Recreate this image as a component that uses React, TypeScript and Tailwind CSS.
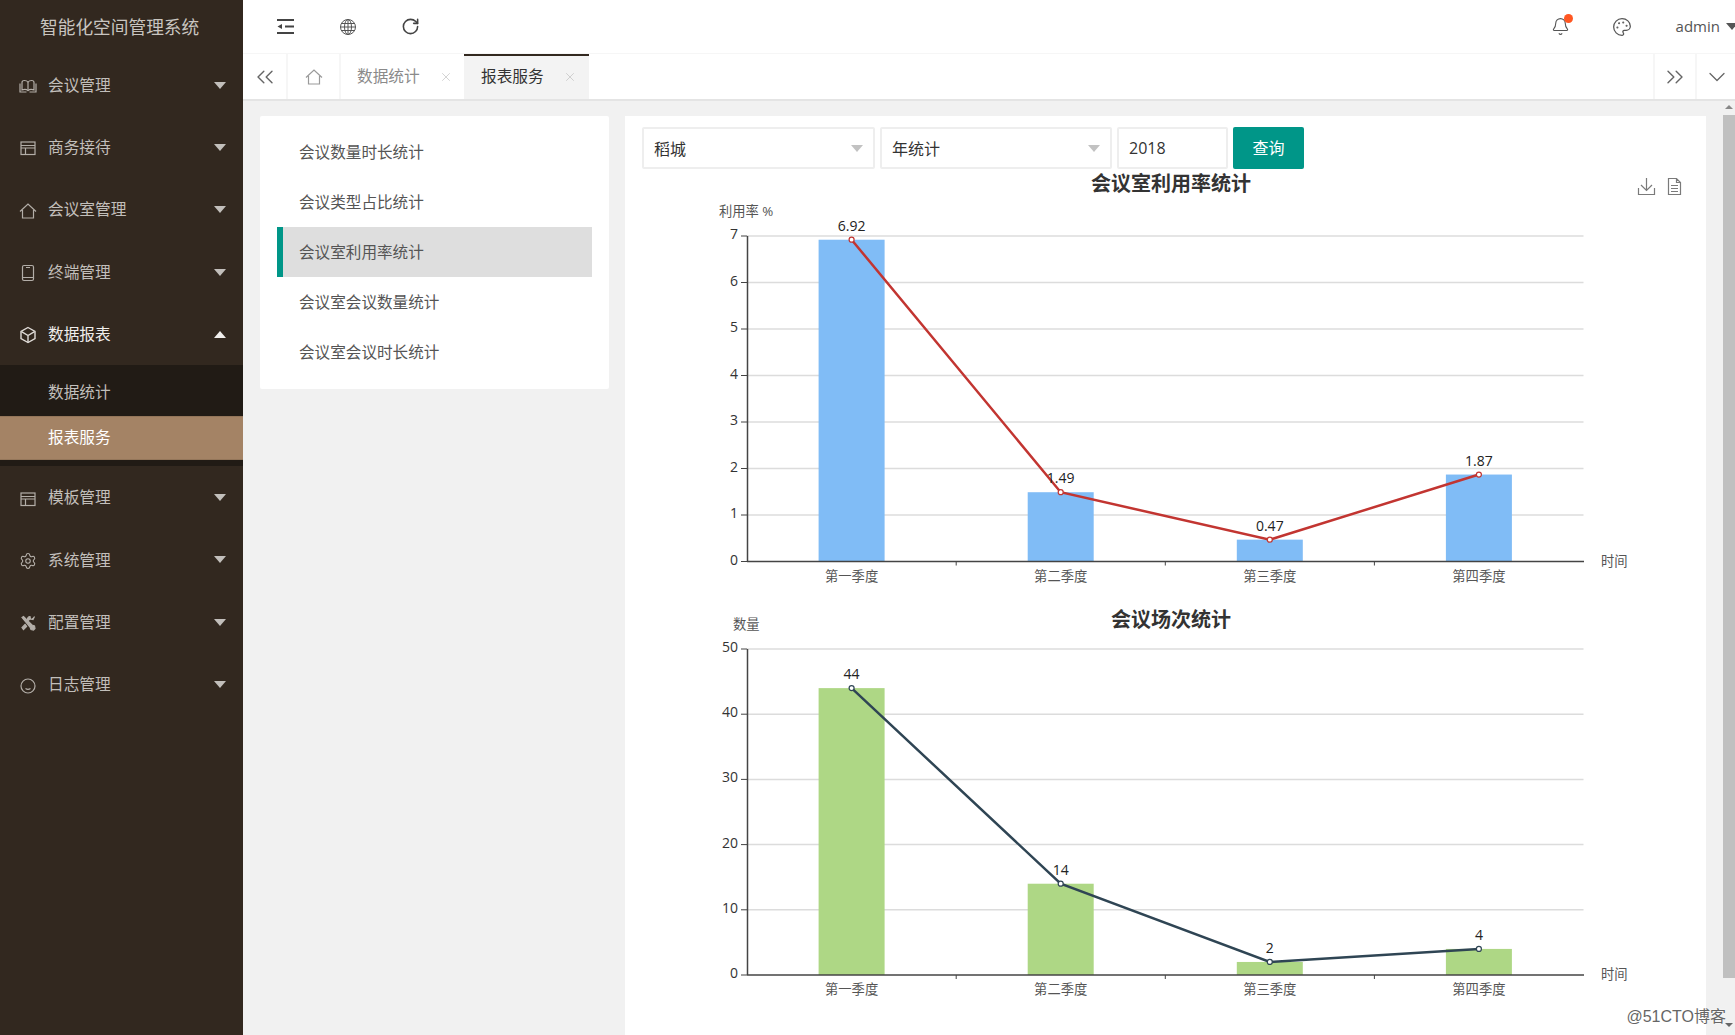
import { Bell, ChevronDown, ChevronsLeft, ChevronsRight, Download, FileText, Palette, RotateCw, Settings, X } from "lucide-react"

const iconProps = {
  width: 18,
  height: 18,
  viewBox: "0 0 18 18",
  fill: "none",
  stroke: "#b3aea8",
  strokeWidth: 1.2,
}

function BookIcon() {
  return (
    <svg {...iconProps}>
      <path d="M3 13V5.500C3 4 4.200 3.500 5.300 3.500 6.800 3.500 8.200 4 9 5c.8-1 2.200-1.500 3.700-1.500 1.100 0 2.300.5 2.300 2V13c-2.200-.8-4.500-.7-6 .6-1.500-1.300-3.800-1.400-6-.6z" />
      <path d="M9 5v8.500M1 6.500V15h6.500M17 6.500V15h-6.500" />
    </svg>
  )
}

function WindowIcon() {
  return (
    <svg {...iconProps}>
      <rect x="2" y="3" width="14" height="12.500" />
      <path d="M2 6.500h14M2 9h14M6.500 9v6.500" />
    </svg>
  )
}

function HomeIcon({ stroke = "#b3aea8" }: { stroke?: string }) {
  return (
    <svg {...iconProps} stroke={stroke}>
      <path d="M1 9.500L9 2l8 7.500M3.500 8v8h11V8" />
    </svg>
  )
}

function TabletIcon() {
  return (
    <svg {...iconProps}>
      <rect x="3.500" y="1.500" width="11" height="15" rx="1.500" />
      <path d="M3.500 13.500h11M7 3.500h4" />
    </svg>
  )
}

function BoxIcon() {
  return (
    <svg {...iconProps} stroke="#e0dcd8" strokeWidth={1.400}>
      <path d="M9 1.500l7 3.800v7.400l-7 3.800-7-3.800V5.300z" />
      <path d="M2.500 5.600L9 9.500l6.500-3.900M9 9.500v7" />
    </svg>
  )
}

function ToolsIcon() {
  return (
    <svg {...iconProps}>
      <path d="M3 3.500l1.500-1L13 11l2.500 1 .5 2.500-1.500 1.500-2.500-.5-1-2.500z" fill="#b3aea8" />
      <path d="M15.500 2.500l-1.500 3-2.500-.5-.5-2.500c-1.500 0-3 1.500-2.500 3.500l1 1M6.500 10L3 13.500 4.500 15.500 8 12" fill="#b3aea8" />
    </svg>
  )
}

function SmileIcon() {
  return (
    <svg {...iconProps}>
      <circle cx="9" cy="9" r="7" />
      <path d="M6.500 11.500c1.500 1 3.500 1 5 0" />
    </svg>
  )
}

function ArrowDown({ color = "#c2bfbb" }: { color?: string }) {
  return <span className="h-0 w-0 border-x-[6.5px] border-t-[7px] border-x-transparent" style={{ borderTopColor: color }} />
}

function ArrowUp() {
  return <span className="h-0 w-0 border-x-[6.5px] border-b-[7px] border-x-transparent border-b-[#f0eeec]" />
}

function MenuItem({ icon, label, open }: { icon: React.ReactNode; label: string; open?: boolean }) {
  return (
    <div className={`flex h-[62.3px] items-center pl-[19px] pr-[17px] text-[15.7px] ${open ? "text-[#f0eeec]" : "text-[#c2bfbb]"}`}>
      <span className="flex w-[29px] shrink-0 pt-[2px]">{icon}</span>
      <span className="flex-1 pt-[1px]">{label}</span>
      {open ? <ArrowUp /> : <ArrowDown />}
    </div>
  )
}

function Sidebar() {
  return (
    <aside className="flex h-full w-[243px] shrink-0 flex-col bg-[#32281f]">
      <div className="flex h-[54px] items-center pl-[40px] text-[17.7px] text-[#c9c5c0]">智能化空间管理系统</div>
      <MenuItem icon={<BookIcon />} label="会议管理" />
      <MenuItem icon={<WindowIcon />} label="商务接待" />
      <MenuItem icon={<HomeIcon />} label="会议室管理" />
      <MenuItem icon={<TabletIcon />} label="终端管理" />
      <MenuItem icon={<BoxIcon />} label="数据报表" open />
      <div className="flex h-[101px] flex-col bg-[#211b15] text-[15.7px]">
        <div className="flex h-[50.5px] items-center pl-[48px] pt-[4px] text-[#c2bfbb]">数据统计</div>
        <div className="flex h-[44.5px] items-center border-y border-[#94765a] bg-[#a48365] pl-[48px] text-white">报表服务</div>
      </div>
      <MenuItem icon={<WindowIcon />} label="模板管理" />
      <MenuItem icon={<Settings size={18} stroke="#b9b4ae" strokeWidth={1.400} />} label="系统管理" />
      <MenuItem icon={<ToolsIcon />} label="配置管理" />
      <MenuItem icon={<SmileIcon />} label="日志管理" />
    </aside>
  )
}

function TopBar() {
  return (
    <header className="flex h-[54px] shrink-0 items-center border-b border-[#f6f6f6] bg-white">
      <div className="ml-[33px] flex items-center gap-[44px] text-[#444]">
        <svg width="19" height="17" viewBox="0 0 19 17" fill="none" stroke="#444" strokeWidth={1.800}>
          <path d="M1 2h17M9 8.500h9M1 15h17" />
          <path d="M1.500 8.500L6 6v5z" fill="#444" stroke="none" />
        </svg>
        <svg width="18" height="18" viewBox="0 0 18 18" fill="none" stroke="#555" strokeWidth={1}>
          <circle cx="9" cy="9" r="7.500" />
          <ellipse cx="9" cy="9" rx="3.500" ry="7.500" />
          <path d="M9 1.500v15M1.500 9h15M2.500 5.500h13M2.500 12.500h13" />
        </svg>
        <RotateCw size={19} strokeWidth={2} />
      </div>
      <div className="ml-auto flex items-center text-[#555]">
        <span className="relative flex">
          <Bell size={19} strokeWidth={1.400} />
          <span className="absolute -right-[3px] -top-[3px] h-[9px] w-[9px] rounded-full bg-[#ff5722]" />
        </span>
        <Palette size={20} strokeWidth={1.500} className="ml-[42px]" />
        <span className="ml-[44px] text-[15px]">admin</span>
        <span className="ml-[6px] -mr-[3px] flex">
          <ArrowDown color="#555" />
        </span>
      </div>
    </header>
  )
}

function TabBar() {
  return (
    <div className="flex h-[47px] shrink-0 border-b-2 border-[#e4e4e4] bg-white text-[15.7px]">
      <div className="flex w-[45px] items-center justify-center border-r-2 border-[#f6f6f6] text-[#666]">
        <ChevronsLeft size={28} strokeWidth={1.200} />
      </div>
      <div className="flex w-[53px] items-center justify-center border-r-2 border-[#f6f6f6]">
        <HomeIcon stroke="#9a9a9a" />
      </div>
      <div className="flex w-[123px] items-center pl-[16px] text-[#8a8a8a]">
        数据统计
        <X size={14} strokeWidth={1} className="ml-[19px] text-[#b5b5b5]" />
      </div>
      <div className="flex w-[125px] items-center border-t-2 border-[#32281f] bg-[#f3f3f3] pb-[2px] pl-[17px] text-[#333]">
        报表服务
        <X size={14} strokeWidth={1} className="ml-[19px] text-[#b5b5b5]" />
      </div>
      <div className="ml-auto flex w-[44px] items-center justify-center border-x-2 border-[#f6f6f6] text-[#666]">
        <ChevronsRight size={28} strokeWidth={1.200} />
      </div>
      <div className="flex w-[38px] items-center justify-center pl-[2px] text-[#666]">
        <ChevronDown size={28} strokeWidth={1.100} />
      </div>
    </div>
  )
}

const reportItems = ["会议数量时长统计", "会议类型占比统计", "会议室利用率统计", "会议室会议数量统计", "会议室会议时长统计"]

function ReportList() {
  return (
    <div className="h-[273px] w-[349px] shrink-0 rounded-[2px] bg-white px-[17px] pt-[11px] text-[15.6px] text-[#555]">
      {reportItems.map((item, i) => (
        <div
          key={item}
          className={`flex h-[50px] items-center pt-[2px] ${i === 2 ? "border-l-[6px] border-[#009688] bg-[#dedede] pl-[16px]" : "pl-[22px]"}`}
        >
          {item}
        </div>
      ))}
    </div>
  )
}

function SelectBox({ label, className }: { label: string; className: string }) {
  return (
    <div className={`flex h-[42px] items-center justify-between rounded-[2px] border-2 border-[#eeeeee] pl-[10px] pr-[10px] text-[16px] text-[#333] ${className}`}>
      <span className="pt-[1px]">{label}</span>
      <span className="h-0 w-0 border-x-[6.5px] border-t-[7px] border-x-transparent border-t-[#c2c2c2]" />
    </div>
  )
}

type ChartProps = {
  top: number
  height: number
  title: string
  titleY: number
  yName: string
  yNameX: number
  yNameY: number
  axisY: number
  unit: number
  ticks: number[]
  data: number[]
  barColor: string
  lineColor: string
  tools?: boolean
}

const categories = ["第一季度", "第二季度", "第三季度", "第四季度"]
const centers = [851.6, 1060.7, 1269.8, 1478.9]

function Chart({ top, height, title, titleY, yName, yNameX, yNameY, axisY, unit, ticks, data, barColor, lineColor, tools }: ChartProps) {
  const points = data.map((v, i) => `${centers[i]},${axisY - v * unit}`).join(" ")
  return (
    <svg className="block" width="1081" height={height} viewBox={`625 ${top} 1081 ${height}`}>
      <text x="1171" y={titleY} textAnchor="middle" fontSize="20" fontWeight="700" fill="#333">
        {title}
      </text>
      <text x={yNameX} y={yNameY} fontSize="13.300" fill="#555">
        {yName}
      </text>
      {ticks.map((t) => {
        const y = axisY - t * unit
        return (
          <g key={t}>
            {t > 0 && <line x1="747" x2="1583.500" y1={y} y2={y} stroke="#dcdcdc" strokeWidth={1.500} />}
            <line x1="741" x2="747" y1={y} y2={y} stroke="#444" strokeWidth={1} />
            <text x="738" y={y + 3} textAnchor="end" fontSize="14" fill="#333">
              {t}
            </text>
          </g>
        )
      })}
      {data.map((v, i) => (
        <rect key={i} x={centers[i] - 33} y={axisY - v * unit} width="66" height={v * unit} fill={barColor} />
      ))}
      <line x1="747.500" x2="747.500" y1={axisY - ticks[ticks.length - 1] * unit} y2={axisY} stroke="#444" strokeWidth={1.500} />
      <line x1="747" x2="1584" y1={axisY} y2={axisY} stroke="#444" strokeWidth={1.500} />
      {[956.2, 1165.3, 1374.4].map((x) => (
        <line key={x} x1={x} x2={x} y1={axisY} y2={axisY + 4} stroke="#444" strokeWidth={1} />
      ))}
      {categories.map((c, i) => (
        <text key={c} x={centers[i]} y={axisY + 19} textAnchor="middle" fontSize="13.300" fill="#555">
          {c}
        </text>
      ))}
      <text x="1601" y={axisY + 4} fontSize="13.300" fill="#555">
        时间
      </text>
      <polyline points={points} fill="none" stroke={lineColor} strokeWidth={2.500} />
      {data.map((v, i) => (
        <g key={i}>
          <circle cx={centers[i]} cy={axisY - v * unit} r="2.500" fill="#fff" stroke={lineColor} strokeWidth={1.200} />
          <text x={centers[i]} y={axisY - v * unit - 9} textAnchor="middle" fontSize="14" fill="#222">
            {v}
          </text>
        </g>
      ))}
      {tools && (
        <g stroke="#7a7a7a" fill="none" strokeWidth={1.200}>
          <path d="M1646.500 178v12M1641 185l5.500 5.500 5.500-5.500M1638.500 188v6.500h16V188" />
          <path d="M1668.500 178.500h8l4 4v12h-12zM1676.500 178.500v4h4M1671 185.500h7M1671 188.500h7M1671 191.500h7" />
        </g>
      )}
    </svg>
  )
}

function ChartPanel() {
  return (
    <div className="h-[919px] w-[1081px] shrink-0 overflow-hidden bg-white">
      <div className="flex gap-[5px] pl-[17px] pt-[11px] text-[16px]">
        <SelectBox label="稻城" className="w-[233px]" />
        <SelectBox label="年统计" className="w-[232px]" />
        <div className="flex h-[42px] w-[111px] items-center rounded-[2px] border-2 border-[#eeeeee] pl-[10px] text-[#333]">2018</div>
        <button className="h-[42px] w-[71px] rounded-[2px] bg-[#009688] text-white">查询</button>
      </div>
      <Chart
        top={169}
        height={431}
        title="会议室利用率统计"
        titleY={191}
        yName="利用率 %"
        yNameX={719}
        yNameY={216}
        axisY={561.5}
        unit={46.5}
        ticks={[0, 1, 2, 3, 4, 5, 6, 7]}
        data={[6.92, 1.49, 0.47, 1.87]}
        barColor="#80bcf6"
        lineColor="#c23531"
        tools
      />
      <Chart
        top={600}
        height={435}
        title="会议场次统计"
        titleY={627}
        yName="数量"
        yNameX={733}
        yNameY={629}
        axisY={975}
        unit={6.52}
        ticks={[0, 10, 20, 30, 40, 50]}
        data={[44, 14, 2, 4]}
        barColor="#aed785"
        lineColor="#2f4554"
      />
    </div>
  )
}

function ScrollBar() {
  return (
    <div className="ml-[17px] flex w-[12px] shrink-0 flex-col items-center">
      <span className="mb-[6px] mt-[4px] h-0 w-0 border-x-[4px] border-b-[4px] border-x-transparent border-b-[#888]" />
      <div className="h-[863px] w-full bg-[#c0c0c0]" />
      <span className="mt-[45px] h-0 w-0 border-x-[4px] border-t-[4px] border-x-transparent border-t-[#666]" />
    </div>
  )
}

export default function App() {
  return (
    <div className="relative flex h-[1035px] w-[1735px] overflow-hidden bg-[#f1f1f1] font-['Open_Sans','Noto_Sans_CJK_SC',sans-serif]">
      <Sidebar />
      <main className="flex min-w-0 flex-1 flex-col">
        <TopBar />
        <TabBar />
        <div className="flex min-h-0 flex-1 pl-[17px]">
          <div className="flex gap-[16px] pt-[15px]">
            <ReportList />
            <ChartPanel />
          </div>
          <ScrollBar />
        </div>
      </main>
      <span className="absolute bottom-[6px] right-[9px] font-['Liberation_Sans','Noto_Sans_CJK_SC',sans-serif] text-[16px] text-[#666] [text-shadow:0_0_2px_#fff]">@51CTO博客</span>
    </div>
  )
}
